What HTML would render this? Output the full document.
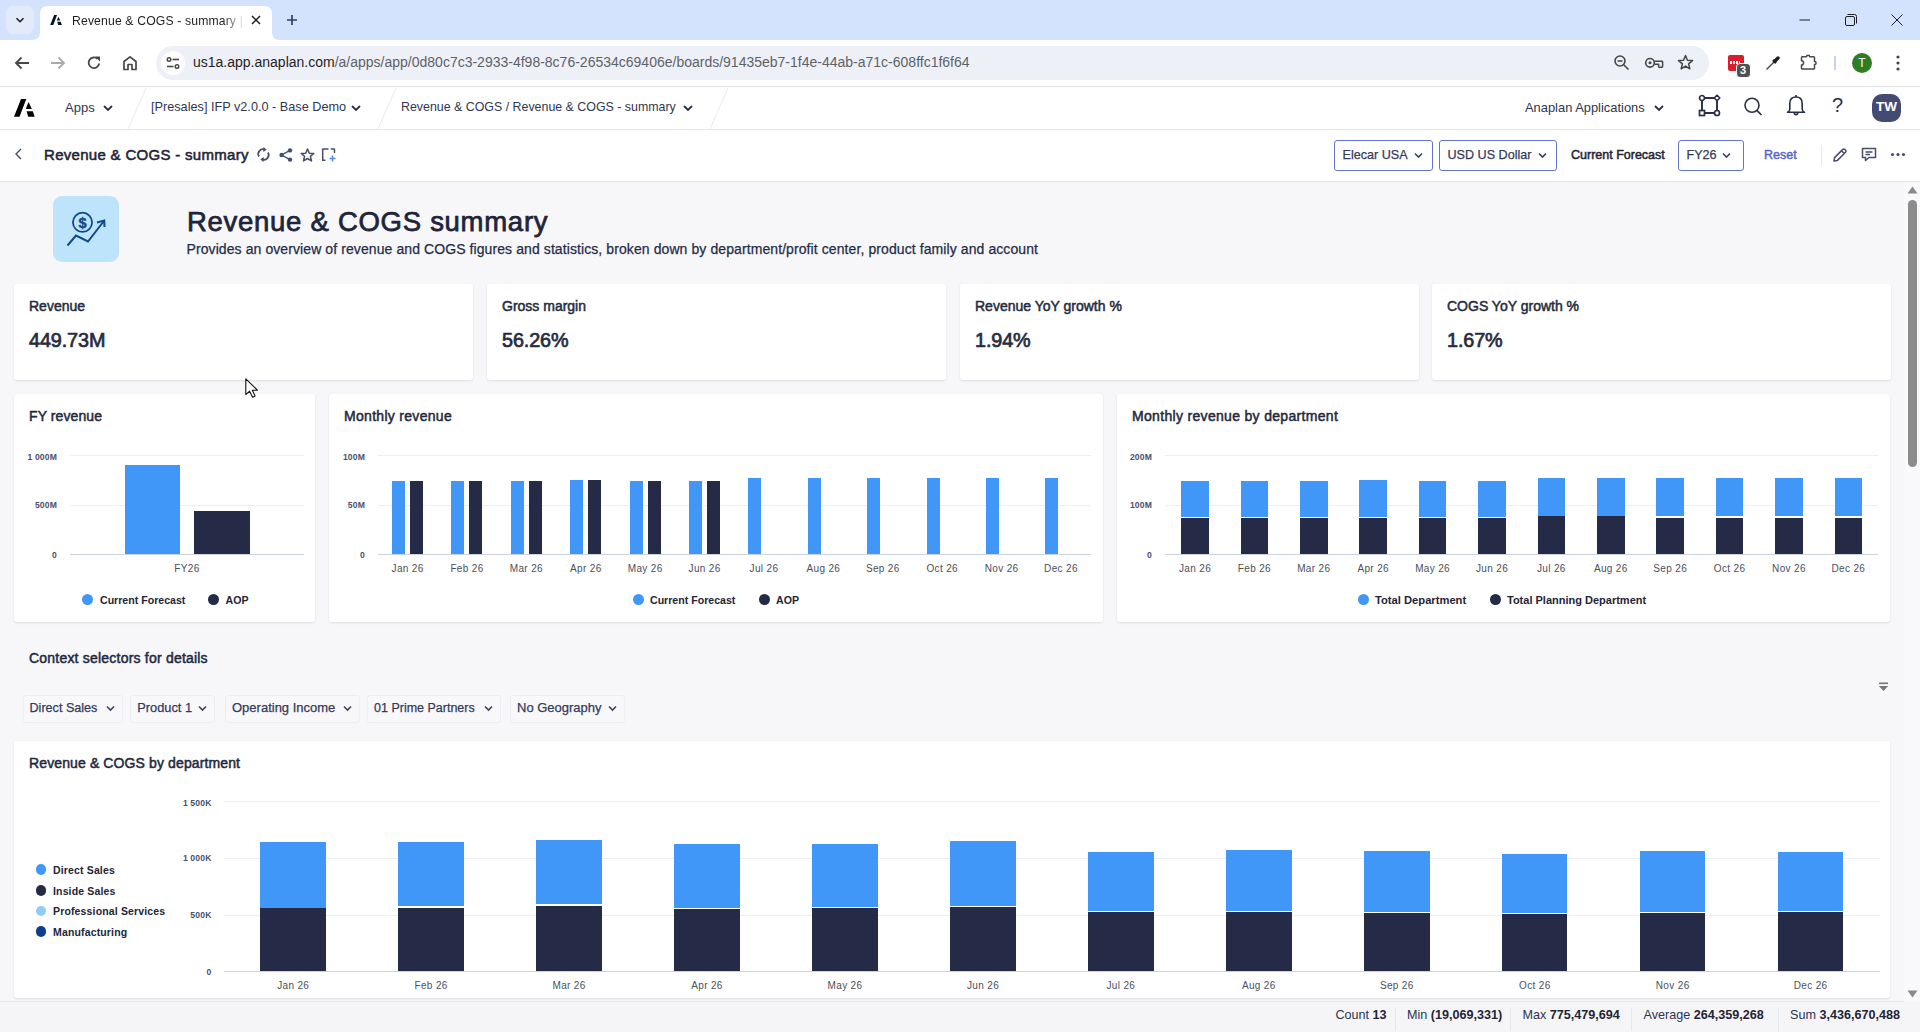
<!DOCTYPE html>
<html><head><meta charset="utf-8">
<style>
*{box-sizing:border-box;margin:0;padding:0}
html,body{width:1920px;height:1032px;overflow:hidden;background:#f7f7f9;font-family:"Liberation Sans",sans-serif;color:#1f2537}
.abs{position:absolute}
#tabs{position:absolute;left:0;top:0;width:1920px;height:40px;background:#d3e3fd}
#toolbar{position:absolute;left:0;top:40px;width:1920px;height:47px;background:#fff;border-bottom:1px solid #e3e3e3}
#apphdr{position:absolute;left:0;top:87px;width:1920px;height:43px;background:#fff;border-bottom:1px solid #e6e7ea}
#pagehdr{position:absolute;left:0;top:130px;width:1920px;height:52px;background:#fff;border-bottom:1px solid #e3e4e8}
#content{position:absolute;left:0;top:182px;width:1920px;height:818px;background:#f7f7f9;overflow:hidden}
#status{position:absolute;left:0;top:1001px;width:1920px;height:31px;background:#f5f5f8;border-top:1px solid #e6e7eb}
.card{position:absolute;background:#fff;border-radius:3px;box-shadow:0 1px 2.5px rgba(20,30,60,.11)}
.t{position:absolute;white-space:nowrap}
svg{position:absolute;overflow:visible}
</style></head><body>
<div id="tabs">
  <div class="abs" style="left:6px;top:6px;width:28px;height:28px;border-radius:8px;background:#e3ebfb"></div>
  <svg style="left:14px;top:14px" width="12" height="12" viewBox="0 0 12 12"><path d="M2.5 4.2 L6 7.7 L9.5 4.2" fill="none" stroke="#1f1f1f" stroke-width="1.6"/></svg>
  <svg style="left:32px;top:6px" width="250" height="34" viewBox="0 0 250 34"><path d="M0 34 Q8 34 8 26 L8 8 Q8 0 16 0 L232 0 Q240 0 240 8 L240 26 Q240 34 248 34 Z" fill="#fff"/></svg>
  <svg style="left:50.3px;top:15px" width="12" height="10" viewBox="0 0 20.7 17.8"><path d="M7 0 L12.3 0 L5.5 17.8 L0 17.8 Z" fill="#061520"/><path d="M14.5 2.9 L17.9 9.9 L11.8 9.9 Z" fill="#061520"/><path d="M12.6 12.2 L18.8 12.2 L20.7 17.8 L14.2 17.8 Z" fill="#061520"/></svg>
  <div class="t" style="left:72px;top:13.5px;font-size:12.2px;color:#1f1f1f;width:170px;overflow:hidden;letter-spacing:0.15px;-webkit-mask-image:linear-gradient(90deg,#000 89%,rgba(0,0,0,.15) 100%)">Revenue &amp; COGS - summary | Anaplan</div>
  <svg style="left:250px;top:14px" width="12" height="12" viewBox="0 0 12 12"><path d="M2 2 L10 10 M10 2 L2 10" stroke="#1f1f1f" stroke-width="1.5"/></svg>
  <svg style="left:287px;top:15px" width="10" height="10" viewBox="0 0 10 10"><path d="M5 0 V10 M0 5 H10" stroke="#34405a" stroke-width="1.7"/></svg>
  <svg style="left:1799px;top:14px" width="12" height="12" viewBox="0 0 12 12"><path d="M0.5 6 H11" stroke="#1f1f1f" stroke-width="1"/></svg>
  <svg style="left:1845px;top:14px" width="12" height="12" viewBox="0 0 12 12"><rect x="0.5" y="2.5" width="9" height="9" rx="1.5" fill="none" stroke="#1f1f1f" stroke-width="1"/><path d="M2.5 0.5 H9.5 Q11.5 0.5 11.5 2.5 V9.5" fill="none" stroke="#1f1f1f" stroke-width="1"/></svg>
  <svg style="left:1891px;top:14px" width="12" height="12" viewBox="0 0 12 12"><path d="M0.5 0.5 L11.5 11.5 M11.5 0.5 L0.5 11.5" stroke="#1f1f1f" stroke-width="1"/></svg>
</div>
<div id="toolbar">
  <svg style="left:14px;top:16px" width="16" height="14" viewBox="0 0 16 14"><path d="M15 7 H2 M7.5 1.5 L2 7 L7.5 12.5" fill="none" stroke="#474747" stroke-width="1.8"/></svg>
  <svg style="left:50px;top:16px" width="16" height="14" viewBox="0 0 16 14"><path d="M1 7 H14 M8.5 1.5 L14 7 L8.5 12.5" fill="none" stroke="#aaaaaa" stroke-width="1.8"/></svg>
  <svg style="left:86px;top:15px" width="16" height="16" viewBox="0 0 16 16"><path d="M13.2 8.5 A5.3 5.3 0 1 1 11.5 3.8" fill="none" stroke="#474747" stroke-width="1.8"/><path d="M9 1.5 H14 V6.5 Z" fill="#474747"/></svg>
  <svg style="left:122px;top:15px" width="16" height="16" viewBox="0 0 16 16"><path d="M2 14.5 V6.5 L8 1.8 L14 6.5 V14.5 H10 V9.5 H6 V14.5 Z" fill="none" stroke="#474747" stroke-width="1.7" stroke-linejoin="round"/></svg>
  <div class="abs" style="left:156px;top:6px;width:1553px;height:34px;border-radius:17px;background:#eef0f7"></div>
  <div class="abs" style="left:161px;top:11px;width:24px;height:24px;border-radius:12px;background:#fff"></div>
  <svg style="left:165px;top:15px" width="16" height="16" viewBox="0 0 16 16"><circle cx="4" cy="4.5" r="1.8" fill="none" stroke="#474747" stroke-width="1.4"/><path d="M7.5 4.5 H14" stroke="#474747" stroke-width="1.6"/><circle cx="12" cy="11.5" r="1.8" fill="none" stroke="#474747" stroke-width="1.4"/><path d="M2 11.5 H8.5" stroke="#474747" stroke-width="1.6"/></svg>
  <div class="t" style="left:193px;top:14px;font-size:14px;color:#5e6268"><span style="color:#1f1f1f">us1a.app.anaplan.com</span>/a/apps/app/0d80c7c3-2933-4f98-8c76-26534c69406e/boards/91435eb7-1f4e-44ab-a71c-608ffc1f6f64</div>
  <svg style="left:1613px;top:14px" width="18" height="18" viewBox="0 0 18 18"><circle cx="7" cy="7" r="5" fill="none" stroke="#474747" stroke-width="1.6"/><path d="M4.5 7 H9.5 M10.7 10.7 L15.5 15.5" stroke="#474747" stroke-width="1.6"/></svg>
  <svg style="left:1644px;top:15px" width="20" height="14" viewBox="0 0 20 14"><circle cx="6" cy="7.8" r="4.3" fill="none" stroke="#474747" stroke-width="1.6"/><circle cx="6" cy="7.8" r="1.5" fill="#474747"/><path d="M10.2 6.3 H18 Q18.6 6.3 18.6 6.9 V11.6 Q18.6 12.2 18 12.2 H15.2 Q14.6 12.2 14.6 11.6 V9.3 H10.2" fill="none" stroke="#474747" stroke-width="1.5" stroke-linejoin="round"/></svg>
  <svg style="left:1677px;top:14px" width="17" height="17" viewBox="0 0 17 17"><path d="M8.5 1.5 L10.4 6.2 L15.5 6.6 L11.6 9.8 L12.8 14.8 L8.5 12.1 L4.2 14.8 L5.4 9.8 L1.5 6.6 L6.6 6.2 Z" fill="none" stroke="#474747" stroke-width="1.5" stroke-linejoin="round"/></svg>
  <div class="abs" style="left:1728px;top:15px;width:16px;height:16px;border-radius:2px;background:#d81f2b"></div>
  <div class="abs" style="left:1730px;top:21px;width:10px;height:3px;background:repeating-linear-gradient(90deg,#fff 0 2px,transparent 2px 3px)"></div>
  <div class="abs" style="left:1735.5px;top:22.5px;width:15px;height:15px;border-radius:4px;background:#505050;border:1px solid #fff;color:#fff;font-size:11px;font-weight:700;text-align:center;line-height:13px">3</div>
  <svg style="left:1765px;top:15px" width="16" height="16" viewBox="0 0 16 16"><path d="M1.5 14.5 L9 7" stroke="#474747" stroke-width="1.5"/><path d="M8 5 L11 8" stroke="#1f1f1f" stroke-width="2.5"/><path d="M10 6 L13 3" stroke="#1f1f1f" stroke-width="3.5" stroke-linecap="round"/></svg>
  <svg style="left:1800px;top:14px" width="19" height="17" viewBox="0 0 19 17"><path d="M2.3 2.8 H6.5 A1.6 1.6 0 0 1 9.7 2.8 H13.7 Q14.5 2.8 14.5 3.6 V7.4 A1.6 1.6 0 0 1 14.5 10.6 V14.2 Q14.5 15 13.7 15 H2.3 Q1.5 15 1.5 14.2 V11 A2.1 2.1 0 0 0 1.5 6.8 V3.6 Q1.5 2.8 2.3 2.8 Z" fill="none" stroke="#474747" stroke-width="1.5" stroke-linejoin="round"/></svg>
  <div class="abs" style="left:1834px;top:16px;width:2px;height:14px;background:#c7d3ec"></div>
  <div class="abs" style="left:1852px;top:13px;width:20px;height:20px;border-radius:10px;background:#2e7d22;color:#fff;font-size:12px;text-align:center;line-height:20px">T</div>
  <svg style="left:1894px;top:15px" width="8" height="16" viewBox="0 0 8 16"><circle cx="4" cy="2" r="1.6" fill="#474747"/><circle cx="4" cy="8" r="1.6" fill="#474747"/><circle cx="4" cy="14" r="1.6" fill="#474747"/></svg>
</div>
<div id="apphdr">
  <svg style="left:14px;top:12px" width="22" height="19" viewBox="0 0 22 19"><path d="M7 0 L12.3 0 L5.5 17.8 L0 17.8 Z" fill="#000"/><path d="M14.5 2.9 L17.9 9.9 L11.8 9.9 Z" fill="#000"/><path d="M12.6 12.2 L18.8 12.2 L20.7 17.8 L14.2 17.8 Z" fill="#000"/></svg>
  <div class="t" style="left:65px;top:13px;font-size:13px;color:#30364f">Apps</div>
  <svg style="left:103px;top:17px" width="10" height="8" viewBox="0 0 10 8"><path d="M1 2 L5 6 L9 2" fill="none" stroke="#2a2f45" stroke-width="1.8"/></svg>
  <svg style="left:127px;top:0px" width="20" height="43" viewBox="0 0 20 43"><path d="M1 42 L19 1" stroke="#e9eaed" stroke-width="1"/></svg>
  <div class="t" style="left:151px;top:13px;font-size:12.7px;color:#30364f">[Presales] IFP v2.0.0 - Base Demo</div>
  <svg style="left:351px;top:17px" width="10" height="8" viewBox="0 0 10 8"><path d="M1 2 L5 6 L9 2" fill="none" stroke="#2a2f45" stroke-width="1.8"/></svg>
  <svg style="left:377px;top:0px" width="20" height="43" viewBox="0 0 20 43"><path d="M1 42 L19 1" stroke="#e9eaed" stroke-width="1"/></svg>
  <div class="t" style="left:401px;top:13px;font-size:12.4px;color:#30364f">Revenue &amp; COGS / Revenue &amp; COGS - summary</div>
  <svg style="left:683px;top:17px" width="10" height="8" viewBox="0 0 10 8"><path d="M1 2 L5 6 L9 2" fill="none" stroke="#2a2f45" stroke-width="1.8"/></svg>
  <svg style="left:709px;top:0px" width="20" height="43" viewBox="0 0 20 43"><path d="M1 42 L19 1" stroke="#e9eaed" stroke-width="1"/></svg>
  <div class="t" style="left:1525px;top:13px;font-size:12.9px;color:#30364f">Anaplan Applications</div>
  <svg style="left:1654px;top:17px" width="10" height="8" viewBox="0 0 10 8"><path d="M1 2 L5 6 L9 2" fill="none" stroke="#2a2f45" stroke-width="1.8"/></svg>
  <svg style="left:1698px;top:7px" width="23" height="23" viewBox="0 0 23 23"><path d="M4 4 H19 M4 19 H19 M4 4 V19 M19 4 V19" stroke="#2a2f45" stroke-width="1.9"/><circle cx="4" cy="4" r="2.5" fill="#fff" stroke="#2a2f45" stroke-width="1.7"/><path d="M19 1.2 L21.8 4 L19 6.8 L16.2 4 Z" fill="#fff" stroke="#2a2f45" stroke-width="1.6" stroke-linejoin="round"/><rect x="1.5" y="16.5" width="5" height="5" fill="#fff" stroke="#2a2f45" stroke-width="1.7"/><circle cx="19" cy="19" r="2.5" fill="#fff" stroke="#2a2f45" stroke-width="1.7"/></svg>
  <svg style="left:1743px;top:10px" width="21" height="21" viewBox="0 0 21 21"><circle cx="9" cy="8.3" r="7" fill="none" stroke="#2a2f45" stroke-width="1.6"/><path d="M13.8 13.3 L18.5 18" stroke="#2a2f45" stroke-width="1.7"/></svg>
  <svg style="left:1786px;top:7px" width="20" height="22" viewBox="0 0 20 22"><path d="M3.8 15.5 V9.5 Q3.8 3 10 3 Q16.2 3 16.2 9.5 V15.5 Q16.5 17.5 18.5 18.2 H1.5 Q3.5 17.5 3.8 15.5 Z" fill="none" stroke="#2a2f45" stroke-width="1.6" stroke-linejoin="round"/><path d="M10 1 V3 M8.2 18.5 Q8.2 20.6 10 20.6 Q11.8 20.6 11.8 18.5" fill="none" stroke="#2a2f45" stroke-width="1.6"/></svg>
  <div class="t" style="left:1832px;top:6.5px;font-size:20px;color:#2a2f45">?</div>
  <div class="abs" style="left:1872px;top:6.5px;width:29px;height:28.5px;border-radius:10px;background:#434b73;color:#fff;font-size:13.5px;font-weight:700;text-align:center;line-height:26.5px">TW</div>
</div>
<div id="pagehdr">
  <svg style="left:14px;top:17px" width="9" height="13" viewBox="0 0 9 13"><path d="M7 2 L2 7 L7 12" fill="none" stroke="#474d6b" stroke-width="1.4"/></svg>
  <div class="t" style="left:44px;top:15.5px;font-size:15px;font-weight:400;color:#1f2537;letter-spacing:0.3px;-webkit-text-stroke:0.55px #1f2537">Revenue &amp; COGS - summary</div>
  <svg style="left:257px;top:17px" width="13" height="15" viewBox="0 0 13 15"><path d="M2 9.5 A4.8 4.8 0 0 1 8 2.6" fill="none" stroke="#474d6b" stroke-width="1.7"/><path d="M6.5 0 L9.6 2.8 L6.3 5 Z" fill="#474d6b"/><path d="M11 5.5 A4.8 4.8 0 0 1 5 12.4" fill="none" stroke="#474d6b" stroke-width="1.7"/><path d="M6.5 15 L3.4 12.2 L6.7 10 Z" fill="#474d6b"/></svg>
  <svg style="left:279px;top:17.5px" width="14" height="14" viewBox="0 0 14 14"><circle cx="11" cy="2.4" r="2.2" fill="#474d6b"/><circle cx="2.6" cy="7" r="2.2" fill="#474d6b"/><circle cx="11" cy="11.6" r="2.2" fill="#474d6b"/><path d="M11 2.4 L2.6 7 L11 11.6" fill="none" stroke="#474d6b" stroke-width="1.4"/></svg>
  <svg style="left:300px;top:17.5px" width="15" height="14" viewBox="0 0 15 14"><path d="M7.5 1 L9.3 5.2 L13.8 5.5 L10.4 8.4 L11.5 12.9 L7.5 10.5 L3.5 12.9 L4.6 8.4 L1.2 5.5 L5.7 5.2 Z" fill="none" stroke="#474d6b" stroke-width="1.5" stroke-linejoin="round"/></svg>
  <svg style="left:322px;top:17.5px" width="14" height="14" viewBox="0 0 14 14"><path d="M4 1 L1 1 Q0.7 1 0.7 1.3 V12.3 H3.5 M6.5 1 L4 1 M8.8 1 H12 Q12.5 1 12.5 1.5 V5" fill="none" stroke="#474d6b" stroke-width="1.5"/><path d="M10.5 7.5 V13.5 M7.5 10.5 H13.5" stroke="#4a90e2" stroke-width="1.6"/></svg>
  <div class="abs" style="left:1334px;top:10px;width:99px;height:31px;border:1px solid #6474cc;border-radius:3px"></div>
  <div class="t" style="left:1342.5px;top:17.5px;font-size:12.6px;color:#353b58;-webkit-text-stroke:0.25px #353b58">Elecar USA</div>
  <svg style="left:1414px;top:22px" width="9" height="7" viewBox="0 0 9 7"><path d="M1 1.5 L4.5 5 L8 1.5" fill="none" stroke="#3b4160" stroke-width="1.6"/></svg>
  <div class="abs" style="left:1439px;top:10px;width:118px;height:31px;border:1px solid #6474cc;border-radius:3px"></div>
  <div class="t" style="left:1447.5px;top:17.5px;font-size:12.6px;color:#353b58;-webkit-text-stroke:0.25px #353b58">USD US Dollar</div>
  <svg style="left:1537.5px;top:22px" width="9" height="7" viewBox="0 0 9 7"><path d="M1 1.5 L4.5 5 L8 1.5" fill="none" stroke="#3b4160" stroke-width="1.7"/></svg>
  <div class="t" style="left:1571px;top:17.5px;font-size:12.5px;font-weight:400;color:#1f2537;-webkit-text-stroke:0.5px #1f2537">Current Forecast</div>
  <div class="abs" style="left:1678px;top:10px;width:66px;height:31px;border:1px solid #6474cc;border-radius:3px"></div>
  <div class="t" style="left:1686.5px;top:17.5px;font-size:12.6px;color:#353b58;-webkit-text-stroke:0.25px #353b58">FY26</div>
  <svg style="left:1722px;top:22px" width="9" height="7" viewBox="0 0 9 7"><path d="M1 1.5 L4.5 5 L8 1.5" fill="none" stroke="#3b4160" stroke-width="1.6"/></svg>
  <div class="t" style="left:1764px;top:17.5px;font-size:12.5px;font-weight:400;color:#5564d4;-webkit-text-stroke:0.45px #5564d4">Reset</div>
  <div class="abs" style="left:1821px;top:15px;width:1px;height:21px;background:#e6e8ee"></div>
  <svg style="left:1832px;top:17px" width="16" height="16" viewBox="0 0 16 16"><path d="M2 14 L2.6 10.6 L10.8 2.4 Q11.8 1.5 12.8 2.4 L13.6 3.2 Q14.5 4.2 13.6 5.2 L5.4 13.4 Z M9.5 3.8 L12.2 6.5" fill="none" stroke="#474d6b" stroke-width="1.5" stroke-linejoin="round"/></svg>
  <svg style="left:1861px;top:17px" width="16" height="15" viewBox="0 0 16 15"><path d="M1.5 1.5 H14.5 V10.5 H8 L4.5 13.5 V10.5 H1.5 Z" fill="none" stroke="#474d6b" stroke-width="1.5" stroke-linejoin="round"/><path d="M4.5 5 H11.5 M4.5 7.5 H9" stroke="#474d6b" stroke-width="1.4"/></svg>
  <svg style="left:1890px;top:22px" width="16" height="5" viewBox="0 0 16 5"><circle cx="2.5" cy="2.5" r="1.6" fill="#474d6b"/><circle cx="8" cy="2.5" r="1.6" fill="#474d6b"/><circle cx="13.5" cy="2.5" r="1.6" fill="#474d6b"/></svg>
</div>
<div id="content">
<div class="abs" style="left:53px;top:14px;width:66px;height:66px;border-radius:9px;background:#bde4fb"></div>
<svg style="left:53px;top:14px" width="66" height="66" viewBox="0 0 66 66">
<circle cx="29.5" cy="26.3" r="9.6" fill="none" stroke="#0f4a8a" stroke-width="1.8"/>
<text x="29.5" y="31.5" font-family="Liberation Sans" font-weight="700" font-size="14.5" fill="#0f4a8a" text-anchor="middle" stroke="#0f4a8a" stroke-width="0.4">$</text>
<path d="M14.5 49.5 L23 39.5 L35 45.5 L50.5 25.5" fill="none" stroke="#0f4a8a" stroke-width="2"/>
<path d="M44 26.5 L51.2 24.5 L51.5 31" fill="none" stroke="#0f4a8a" stroke-width="2.1"/>
</svg>
<div class="t" style="left:187px;top:24px;font-size:27.5px;font-weight:400;color:#1f2539;letter-spacing:0.72px;-webkit-text-stroke:0.75px #1f2539">Revenue &amp; COGS summary</div>
<div class="t" style="left:186.5px;top:59px;font-size:14px;font-weight:400;color:#262c48;letter-spacing:0.09px;-webkit-text-stroke:0.25px #262c48">Provides an overview of revenue and COGS figures and statistics, broken down by department/profit center, product family and account</div>
<div class="card" style="left:14px;top:102px;width:458.5px;height:96px"></div>
<div class="t" style="left:29px;top:116px;font-size:14px;font-weight:400;color:#262c40;letter-spacing:0px;-webkit-text-stroke:0.5px #262c40">Revenue</div>
<div class="t" style="left:29px;top:146.7px;font-size:19.8px;font-weight:400;color:#262c40;letter-spacing:-0.1px;-webkit-text-stroke:0.7px #262c40">449.73M</div>
<div class="card" style="left:487px;top:102px;width:458.5px;height:96px"></div>
<div class="t" style="left:502px;top:116px;font-size:14px;font-weight:400;color:#262c40;letter-spacing:0px;-webkit-text-stroke:0.5px #262c40">Gross margin</div>
<div class="t" style="left:502px;top:146.7px;font-size:19.8px;font-weight:400;color:#262c40;letter-spacing:-0.1px;-webkit-text-stroke:0.7px #262c40">56.26%</div>
<div class="card" style="left:960px;top:102px;width:458.5px;height:96px"></div>
<div class="t" style="left:975px;top:116px;font-size:14px;font-weight:400;color:#262c40;letter-spacing:0px;-webkit-text-stroke:0.5px #262c40">Revenue YoY growth %</div>
<div class="t" style="left:975px;top:146.7px;font-size:19.8px;font-weight:400;color:#262c40;letter-spacing:-0.1px;-webkit-text-stroke:0.7px #262c40">1.94%</div>
<div class="card" style="left:1432px;top:102px;width:458.5px;height:96px"></div>
<div class="t" style="left:1447px;top:116px;font-size:14px;font-weight:400;color:#262c40;letter-spacing:0px;-webkit-text-stroke:0.5px #262c40">COGS YoY growth %</div>
<div class="t" style="left:1447px;top:146.7px;font-size:19.8px;font-weight:400;color:#262c40;letter-spacing:-0.1px;-webkit-text-stroke:0.7px #262c40">1.67%</div>
<div class="card" style="left:14px;top:212px;width:301px;height:228px"></div>
<div class="card" style="left:329px;top:212px;width:774px;height:228px"></div>
<div class="card" style="left:1117px;top:212px;width:773px;height:228px"></div>
<div class="t" style="left:29px;top:225.8px;font-size:14px;font-weight:400;color:#232a3e;letter-spacing:0.1px;-webkit-text-stroke:0.5px #232a3e">FY revenue</div>
<div class="t" style="left:344px;top:225.8px;font-size:14px;font-weight:400;color:#232a3e;letter-spacing:0.3px;-webkit-text-stroke:0.5px #232a3e">Monthly revenue</div>
<div class="t" style="left:1132px;top:225.8px;font-size:14px;font-weight:400;color:#232a3e;letter-spacing:0.32px;-webkit-text-stroke:0.5px #232a3e">Monthly revenue by department</div>
<div class="abs" style="left:70px;top:273px;width:234px;height:1px;background:#eceef2"></div><div class="abs" style="left:70px;top:323px;width:234px;height:1px;background:#eceef2"></div><div class="abs" style="left:70px;top:372px;width:234px;height:1px;background:#ccd3e0"></div>
<div class="t" style="left:-3px;width:60px;text-align:right;top:269.85px;line-height:10px;font-size:8.6px;font-weight:700;color:#4a5070;letter-spacing:0.15px">1 000M</div>
<div class="t" style="left:-3px;width:60px;text-align:right;top:318.15px;line-height:10px;font-size:8.6px;font-weight:700;color:#4a5070;letter-spacing:0.15px">500M</div>
<div class="t" style="left:-3px;width:60px;text-align:right;top:368.15px;line-height:10px;font-size:8.6px;font-weight:700;color:#4a5070;letter-spacing:0.15px">0</div>
<div class="abs" style="left:125px;top:283px;width:55px;height:89px;background:#4197f7"></div>
<div class="abs" style="left:194px;top:329px;width:56px;height:43px;background:#252b47"></div>
<div class="t" style="left:147.0px;width:80px;text-align:center;top:380.5px;font-size:10px;color:#4b4f5c;letter-spacing:0.35px">FY26</div>
<div class="abs" style="left:82.0px;top:411.9px;width:11.0px;height:11.0px;border-radius:50%;background:#4197f7"></div>
<div class="t" style="left:100px;top:411.6px;font-size:10.6px;font-weight:700;color:#1f2537;">Current Forecast</div>
<div class="abs" style="left:208.0px;top:411.9px;width:11.0px;height:11.0px;border-radius:50%;background:#252b47"></div>
<div class="t" style="left:225.5px;top:411.6px;font-size:10.6px;font-weight:700;color:#1f2537;">AOP</div>
<div class="abs" style="left:378px;top:273px;width:713px;height:1px;background:#eceef2"></div><div class="abs" style="left:378px;top:323px;width:713px;height:1px;background:#eceef2"></div><div class="abs" style="left:378px;top:372px;width:713px;height:1px;background:#ccd3e0"></div>
<div class="t" style="left:305px;width:60px;text-align:right;top:269.85px;line-height:10px;font-size:8.6px;font-weight:700;color:#4a5070;letter-spacing:0.15px">100M</div>
<div class="t" style="left:305px;width:60px;text-align:right;top:318.15px;line-height:10px;font-size:8.6px;font-weight:700;color:#4a5070;letter-spacing:0.15px">50M</div>
<div class="t" style="left:305px;width:60px;text-align:right;top:368.15px;line-height:10px;font-size:8.6px;font-weight:700;color:#4a5070;letter-spacing:0.15px">0</div>
<div class="abs" style="left:392px;top:299px;width:13px;height:73px;background:#4197f7"></div>
<div class="abs" style="left:410px;top:299px;width:13px;height:73px;background:#252b47"></div>
<div class="t" style="left:367.6px;width:80px;text-align:center;top:380.5px;font-size:10px;color:#4b4f5c;letter-spacing:0.35px">Jan 26</div>
<div class="abs" style="left:451px;top:299px;width:13px;height:73px;background:#4197f7"></div>
<div class="abs" style="left:469px;top:299px;width:13px;height:73px;background:#252b47"></div>
<div class="t" style="left:427.0px;width:80px;text-align:center;top:380.5px;font-size:10px;color:#4b4f5c;letter-spacing:0.35px">Feb 26</div>
<div class="abs" style="left:511px;top:299px;width:13px;height:73px;background:#4197f7"></div>
<div class="abs" style="left:529px;top:299px;width:13px;height:73px;background:#252b47"></div>
<div class="t" style="left:486.4px;width:80px;text-align:center;top:380.5px;font-size:10px;color:#4b4f5c;letter-spacing:0.35px">Mar 26</div>
<div class="abs" style="left:570px;top:298px;width:13px;height:74px;background:#4197f7"></div>
<div class="abs" style="left:588px;top:298px;width:13px;height:74px;background:#252b47"></div>
<div class="t" style="left:545.8px;width:80px;text-align:center;top:380.5px;font-size:10px;color:#4b4f5c;letter-spacing:0.35px">Apr 26</div>
<div class="abs" style="left:630px;top:299px;width:13px;height:73px;background:#4197f7"></div>
<div class="abs" style="left:648px;top:299px;width:13px;height:73px;background:#252b47"></div>
<div class="t" style="left:605.2px;width:80px;text-align:center;top:380.5px;font-size:10px;color:#4b4f5c;letter-spacing:0.35px">May 26</div>
<div class="abs" style="left:689px;top:299px;width:13px;height:73px;background:#4197f7"></div>
<div class="abs" style="left:707px;top:299px;width:13px;height:73px;background:#252b47"></div>
<div class="t" style="left:664.6px;width:80px;text-align:center;top:380.5px;font-size:10px;color:#4b4f5c;letter-spacing:0.35px">Jun 26</div>
<div class="abs" style="left:748px;top:296px;width:13px;height:76px;background:#4197f7"></div>
<div class="t" style="left:724.0px;width:80px;text-align:center;top:380.5px;font-size:10px;color:#4b4f5c;letter-spacing:0.35px">Jul 26</div>
<div class="abs" style="left:808px;top:296px;width:13px;height:76px;background:#4197f7"></div>
<div class="t" style="left:783.4px;width:80px;text-align:center;top:380.5px;font-size:10px;color:#4b4f5c;letter-spacing:0.35px">Aug 26</div>
<div class="abs" style="left:867px;top:296px;width:13px;height:76px;background:#4197f7"></div>
<div class="t" style="left:842.8px;width:80px;text-align:center;top:380.5px;font-size:10px;color:#4b4f5c;letter-spacing:0.35px">Sep 26</div>
<div class="abs" style="left:927px;top:296px;width:13px;height:76px;background:#4197f7"></div>
<div class="t" style="left:902.2px;width:80px;text-align:center;top:380.5px;font-size:10px;color:#4b4f5c;letter-spacing:0.35px">Oct 26</div>
<div class="abs" style="left:986px;top:296px;width:13px;height:76px;background:#4197f7"></div>
<div class="t" style="left:961.6px;width:80px;text-align:center;top:380.5px;font-size:10px;color:#4b4f5c;letter-spacing:0.35px">Nov 26</div>
<div class="abs" style="left:1045px;top:296px;width:13px;height:76px;background:#4197f7"></div>
<div class="t" style="left:1021.0px;width:80px;text-align:center;top:380.5px;font-size:10px;color:#4b4f5c;letter-spacing:0.35px">Dec 26</div>
<div class="abs" style="left:633.0px;top:411.9px;width:11.0px;height:11.0px;border-radius:50%;background:#4197f7"></div>
<div class="t" style="left:650px;top:411.6px;font-size:10.6px;font-weight:700;color:#1f2537;">Current Forecast</div>
<div class="abs" style="left:758.5px;top:411.9px;width:11.0px;height:11.0px;border-radius:50%;background:#252b47"></div>
<div class="t" style="left:776px;top:411.6px;font-size:10.6px;font-weight:700;color:#1f2537;">AOP</div>
<div class="abs" style="left:1165px;top:273px;width:713px;height:1px;background:#eceef2"></div><div class="abs" style="left:1165px;top:323px;width:713px;height:1px;background:#eceef2"></div><div class="abs" style="left:1165px;top:372px;width:713px;height:1px;background:#ccd3e0"></div>
<div class="t" style="left:1092px;width:60px;text-align:right;top:269.85px;line-height:10px;font-size:8.6px;font-weight:700;color:#4a5070;letter-spacing:0.15px">200M</div>
<div class="t" style="left:1092px;width:60px;text-align:right;top:318.15px;line-height:10px;font-size:8.6px;font-weight:700;color:#4a5070;letter-spacing:0.15px">100M</div>
<div class="t" style="left:1092px;width:60px;text-align:right;top:368.15px;line-height:10px;font-size:8.6px;font-weight:700;color:#4a5070;letter-spacing:0.15px">0</div>
<div class="abs" style="left:1181px;top:299px;width:28px;height:36px;background:#4197f7"></div>
<div class="abs" style="left:1181px;top:336px;width:28px;height:36px;background:#252b47"></div>
<div class="t" style="left:1155.0px;width:80px;text-align:center;top:380.5px;font-size:10px;color:#4b4f5c;letter-spacing:0.35px">Jan 26</div>
<div class="abs" style="left:1241px;top:299px;width:27px;height:36px;background:#4197f7"></div>
<div class="abs" style="left:1241px;top:336px;width:27px;height:36px;background:#252b47"></div>
<div class="t" style="left:1214.4px;width:80px;text-align:center;top:380.5px;font-size:10px;color:#4b4f5c;letter-spacing:0.35px">Feb 26</div>
<div class="abs" style="left:1300px;top:299px;width:28px;height:36px;background:#4197f7"></div>
<div class="abs" style="left:1300px;top:336px;width:28px;height:36px;background:#252b47"></div>
<div class="t" style="left:1273.8px;width:80px;text-align:center;top:380.5px;font-size:10px;color:#4b4f5c;letter-spacing:0.35px">Mar 26</div>
<div class="abs" style="left:1359px;top:298px;width:28px;height:37px;background:#4197f7"></div>
<div class="abs" style="left:1359px;top:336px;width:28px;height:36px;background:#252b47"></div>
<div class="t" style="left:1333.2px;width:80px;text-align:center;top:380.5px;font-size:10px;color:#4b4f5c;letter-spacing:0.35px">Apr 26</div>
<div class="abs" style="left:1419px;top:299px;width:27px;height:36px;background:#4197f7"></div>
<div class="abs" style="left:1419px;top:336px;width:27px;height:36px;background:#252b47"></div>
<div class="t" style="left:1392.6px;width:80px;text-align:center;top:380.5px;font-size:10px;color:#4b4f5c;letter-spacing:0.35px">May 26</div>
<div class="abs" style="left:1478px;top:299px;width:28px;height:36px;background:#4197f7"></div>
<div class="abs" style="left:1478px;top:336px;width:28px;height:36px;background:#252b47"></div>
<div class="t" style="left:1452.0px;width:80px;text-align:center;top:380.5px;font-size:10px;color:#4b4f5c;letter-spacing:0.35px">Jun 26</div>
<div class="abs" style="left:1538px;top:296px;width:27px;height:38px;background:#4197f7"></div>
<div class="abs" style="left:1538px;top:334px;width:27px;height:38px;background:#252b47"></div>
<div class="t" style="left:1511.4px;width:80px;text-align:center;top:380.5px;font-size:10px;color:#4b4f5c;letter-spacing:0.35px">Jul 26</div>
<div class="abs" style="left:1597px;top:296px;width:28px;height:38px;background:#4197f7"></div>
<div class="abs" style="left:1597px;top:334px;width:28px;height:38px;background:#252b47"></div>
<div class="t" style="left:1570.8px;width:80px;text-align:center;top:380.5px;font-size:10px;color:#4b4f5c;letter-spacing:0.35px">Aug 26</div>
<div class="abs" style="left:1656px;top:296px;width:28px;height:38px;background:#4197f7"></div>
<div class="abs" style="left:1656px;top:336px;width:28px;height:36px;background:#252b47"></div>
<div class="t" style="left:1630.2px;width:80px;text-align:center;top:380.5px;font-size:10px;color:#4b4f5c;letter-spacing:0.35px">Sep 26</div>
<div class="abs" style="left:1716px;top:296px;width:27px;height:38px;background:#4197f7"></div>
<div class="abs" style="left:1716px;top:336px;width:27px;height:36px;background:#252b47"></div>
<div class="t" style="left:1689.6px;width:80px;text-align:center;top:380.5px;font-size:10px;color:#4b4f5c;letter-spacing:0.35px">Oct 26</div>
<div class="abs" style="left:1775px;top:296px;width:28px;height:38px;background:#4197f7"></div>
<div class="abs" style="left:1775px;top:336px;width:28px;height:36px;background:#252b47"></div>
<div class="t" style="left:1749.0px;width:80px;text-align:center;top:380.5px;font-size:10px;color:#4b4f5c;letter-spacing:0.35px">Nov 26</div>
<div class="abs" style="left:1835px;top:296px;width:27px;height:38px;background:#4197f7"></div>
<div class="abs" style="left:1835px;top:336px;width:27px;height:36px;background:#252b47"></div>
<div class="t" style="left:1808.4px;width:80px;text-align:center;top:380.5px;font-size:10px;color:#4b4f5c;letter-spacing:0.35px">Dec 26</div>
<div class="abs" style="left:1357.5px;top:411.9px;width:11.0px;height:11.0px;border-radius:50%;background:#4197f7"></div>
<div class="t" style="left:1375px;top:411.6px;font-size:11.2px;font-weight:700;color:#1f2537;">Total Department</div>
<div class="abs" style="left:1489.5px;top:411.9px;width:11.0px;height:11.0px;border-radius:50%;background:#252b47"></div>
<div class="t" style="left:1507px;top:411.6px;font-size:11px;font-weight:700;color:#1f2537;">Total Planning Department</div>
<div class="t" style="left:29px;top:468px;font-size:14px;font-weight:400;color:#232a3e;letter-spacing:0.21px;-webkit-text-stroke:0.5px #232a3e">Context selectors for details</div>
<div class="abs" style="left:22.5px;top:512.5px;width:100px;height:28px;border:1px solid #eceef4;border-radius:3px;background:#f8f8fb"></div>
<div class="t" style="left:29.5px;top:511.70000000000005px;height:28px;line-height:28px;font-size:12.6px;color:#353b58;-webkit-text-stroke:0.25px #353b58">Direct Sales</div>
<svg style="left:105.5px;top:523px" width="9" height="7" viewBox="0 0 9 7"><path d="M1 1.5 L4.5 5 L8 1.5" fill="none" stroke="#3b4160" stroke-width="1.6"/></svg>
<div class="abs" style="left:130.3px;top:512.5px;width:85px;height:28px;border:1px solid #eceef4;border-radius:3px;background:#f8f8fb"></div>
<div class="t" style="left:137.3px;top:511.70000000000005px;height:28px;line-height:28px;font-size:12.8px;color:#353b58;-webkit-text-stroke:0.25px #353b58">Product 1</div>
<svg style="left:198.3px;top:523px" width="9" height="7" viewBox="0 0 9 7"><path d="M1 1.5 L4.5 5 L8 1.5" fill="none" stroke="#3b4160" stroke-width="1.6"/></svg>
<div class="abs" style="left:225px;top:512.5px;width:135px;height:28px;border:1px solid #eceef4;border-radius:3px;background:#f8f8fb"></div>
<div class="t" style="left:232px;top:511.70000000000005px;height:28px;line-height:28px;font-size:13px;color:#353b58;-webkit-text-stroke:0.25px #353b58">Operating Income</div>
<svg style="left:343px;top:523px" width="9" height="7" viewBox="0 0 9 7"><path d="M1 1.5 L4.5 5 L8 1.5" fill="none" stroke="#3b4160" stroke-width="1.6"/></svg>
<div class="abs" style="left:367px;top:512.5px;width:134px;height:28px;border:1px solid #eceef4;border-radius:3px;background:#f8f8fb"></div>
<div class="t" style="left:374px;top:511.70000000000005px;height:28px;line-height:28px;font-size:12.5px;color:#353b58;-webkit-text-stroke:0.25px #353b58">01 Prime Partners</div>
<svg style="left:484px;top:523px" width="9" height="7" viewBox="0 0 9 7"><path d="M1 1.5 L4.5 5 L8 1.5" fill="none" stroke="#3b4160" stroke-width="1.6"/></svg>
<div class="abs" style="left:510px;top:512.5px;width:115px;height:28px;border:1px solid #eceef4;border-radius:3px;background:#f8f8fb"></div>
<div class="t" style="left:517px;top:511.70000000000005px;height:28px;line-height:28px;font-size:13px;color:#353b58;-webkit-text-stroke:0.25px #353b58">No Geography</div>
<svg style="left:608px;top:523px" width="9" height="7" viewBox="0 0 9 7"><path d="M1 1.5 L4.5 5 L8 1.5" fill="none" stroke="#3b4160" stroke-width="1.6"/></svg>
<svg style="left:1878px;top:499px" width="11" height="11" viewBox="0 0 11 11"><rect x="1" y="1.5" width="9" height="1.6" fill="#777"/><path d="M0.8 5 H10.2 L5.5 10 Z" fill="#777"/></svg>
<div class="card" style="left:14px;top:559px;width:1876px;height:257px"></div>
<div class="t" style="left:29px;top:573.3px;font-size:14px;font-weight:400;color:#232a3e;letter-spacing:0.12px;-webkit-text-stroke:0.5px #232a3e">Revenue &amp; COGS by department</div>
<div class="abs" style="left:224px;top:619px;width:1656px;height:1px;background:#eceef2"></div><div class="abs" style="left:224px;top:676px;width:1656px;height:1px;background:#eceef2"></div><div class="abs" style="left:224px;top:732.5px;width:1656px;height:1px;background:#eceef2"></div><div class="abs" style="left:224px;top:789px;width:1656px;height:1px;background:#ccd3e0"></div>
<div class="t" style="left:151.5px;width:60px;text-align:right;top:615.85px;line-height:10px;font-size:8.6px;font-weight:700;color:#4a5070;letter-spacing:0.15px">1 500K</div>
<div class="t" style="left:151.5px;width:60px;text-align:right;top:671.35px;line-height:10px;font-size:8.6px;font-weight:700;color:#4a5070;letter-spacing:0.15px">1 000K</div>
<div class="t" style="left:151.5px;width:60px;text-align:right;top:728.15px;line-height:10px;font-size:8.6px;font-weight:700;color:#4a5070;letter-spacing:0.15px">500K</div>
<div class="t" style="left:151.5px;width:60px;text-align:right;top:785.15px;line-height:10px;font-size:8.6px;font-weight:700;color:#4a5070;letter-spacing:0.15px">0</div>
<div class="abs" style="left:260px;top:660px;width:66px;height:66px;background:#4197f7"></div>
<div class="abs" style="left:260px;top:726px;width:66px;height:63px;background:#252b47"></div>
<div class="t" style="left:253.2px;width:80px;text-align:center;top:797.5px;font-size:10px;color:#4b4f5c;letter-spacing:0.35px">Jan 26</div>
<div class="abs" style="left:398px;top:660px;width:66px;height:64px;background:#4197f7"></div>
<div class="abs" style="left:398px;top:726px;width:66px;height:63px;background:#252b47"></div>
<div class="t" style="left:391.1px;width:80px;text-align:center;top:797.5px;font-size:10px;color:#4b4f5c;letter-spacing:0.35px">Feb 26</div>
<div class="abs" style="left:536px;top:658px;width:66px;height:64px;background:#4197f7"></div>
<div class="abs" style="left:536px;top:724px;width:66px;height:65px;background:#252b47"></div>
<div class="t" style="left:529.1px;width:80px;text-align:center;top:797.5px;font-size:10px;color:#4b4f5c;letter-spacing:0.35px">Mar 26</div>
<div class="abs" style="left:674px;top:662px;width:66px;height:64px;background:#4197f7"></div>
<div class="abs" style="left:674px;top:727px;width:66px;height:62px;background:#252b47"></div>
<div class="t" style="left:667.0px;width:80px;text-align:center;top:797.5px;font-size:10px;color:#4b4f5c;letter-spacing:0.35px">Apr 26</div>
<div class="abs" style="left:812px;top:662px;width:66px;height:63px;background:#4197f7"></div>
<div class="abs" style="left:812px;top:726px;width:66px;height:63px;background:#252b47"></div>
<div class="t" style="left:805.0px;width:80px;text-align:center;top:797.5px;font-size:10px;color:#4b4f5c;letter-spacing:0.35px">May 26</div>
<div class="abs" style="left:950px;top:659px;width:66px;height:65px;background:#4197f7"></div>
<div class="abs" style="left:950px;top:725px;width:66px;height:64px;background:#252b47"></div>
<div class="t" style="left:943.0px;width:80px;text-align:center;top:797.5px;font-size:10px;color:#4b4f5c;letter-spacing:0.35px">Jun 26</div>
<div class="abs" style="left:1088px;top:670px;width:66px;height:59px;background:#4197f7"></div>
<div class="abs" style="left:1088px;top:730px;width:66px;height:59px;background:#252b47"></div>
<div class="t" style="left:1080.9px;width:80px;text-align:center;top:797.5px;font-size:10px;color:#4b4f5c;letter-spacing:0.35px">Jul 26</div>
<div class="abs" style="left:1226px;top:668px;width:66px;height:61px;background:#4197f7"></div>
<div class="abs" style="left:1226px;top:730px;width:66px;height:59px;background:#252b47"></div>
<div class="t" style="left:1218.8px;width:80px;text-align:center;top:797.5px;font-size:10px;color:#4b4f5c;letter-spacing:0.35px">Aug 26</div>
<div class="abs" style="left:1364px;top:669px;width:66px;height:61px;background:#4197f7"></div>
<div class="abs" style="left:1364px;top:731px;width:66px;height:58px;background:#252b47"></div>
<div class="t" style="left:1356.8px;width:80px;text-align:center;top:797.5px;font-size:10px;color:#4b4f5c;letter-spacing:0.35px">Sep 26</div>
<div class="abs" style="left:1502px;top:672px;width:65px;height:59px;background:#4197f7"></div>
<div class="abs" style="left:1502px;top:732px;width:65px;height:57px;background:#252b47"></div>
<div class="t" style="left:1494.8px;width:80px;text-align:center;top:797.5px;font-size:10px;color:#4b4f5c;letter-spacing:0.35px">Oct 26</div>
<div class="abs" style="left:1640px;top:669px;width:65px;height:61px;background:#4197f7"></div>
<div class="abs" style="left:1640px;top:731px;width:65px;height:58px;background:#252b47"></div>
<div class="t" style="left:1632.7px;width:80px;text-align:center;top:797.5px;font-size:10px;color:#4b4f5c;letter-spacing:0.35px">Nov 26</div>
<div class="abs" style="left:1778px;top:670px;width:65px;height:59px;background:#4197f7"></div>
<div class="abs" style="left:1778px;top:730px;width:65px;height:59px;background:#252b47"></div>
<div class="t" style="left:1770.6px;width:80px;text-align:center;top:797.5px;font-size:10px;color:#4b4f5c;letter-spacing:0.35px">Dec 26</div>
<div class="abs" style="left:35.599999999999994px;top:682.3px;width:10.4px;height:10.4px;border-radius:50%;background:#4197f7"></div>
<div class="t" style="left:53px;top:681.5px;font-size:10.5px;font-weight:700;color:#1f2537;letter-spacing:0.15px">Direct Sales</div>
<div class="abs" style="left:35.599999999999994px;top:703.3px;width:10.4px;height:10.4px;border-radius:50%;background:#252b47"></div>
<div class="t" style="left:53px;top:702.5px;font-size:10.5px;font-weight:700;color:#1f2537;letter-spacing:0.15px">Inside Sales</div>
<div class="abs" style="left:35.599999999999994px;top:723.8px;width:10.4px;height:10.4px;border-radius:50%;background:#8dcdf7"></div>
<div class="t" style="left:53px;top:723px;font-size:10.5px;font-weight:700;color:#1f2537;letter-spacing:0.15px">Professional Services</div>
<div class="abs" style="left:35.599999999999994px;top:744.3px;width:10.4px;height:10.4px;border-radius:50%;background:#0e3f8f"></div>
<div class="t" style="left:53px;top:743.5px;font-size:10.5px;font-weight:700;color:#1f2537;letter-spacing:0.15px">Manufacturing</div>
</div>
<div id="status">
  <div class="t" style="left:1335.5px;top:5.5px;font-size:12.6px;color:#2c3350">Count <b style="color:#1f2537">13</b></div>
  <div class="abs" style="left:1395px;top:6px;width:1px;height:23px;background:#e6e7ec"></div>
  <div class="t" style="left:1407px;top:5.5px;font-size:12.6px;color:#2c3350">Min <b style="color:#1f2537">(19,069,331)</b></div>
  <div class="abs" style="left:1510px;top:6px;width:1px;height:23px;background:#e6e7ec"></div>
  <div class="t" style="left:1522.5px;top:5.5px;font-size:12.6px;color:#2c3350">Max <b style="color:#1f2537">775,479,694</b></div>
  <div class="abs" style="left:1631px;top:6px;width:1px;height:23px;background:#e6e7ec"></div>
  <div class="t" style="left:1643.5px;top:5.5px;font-size:12.6px;color:#2c3350">Average <b style="color:#1f2537">264,359,268</b></div>
  <div class="abs" style="left:1778px;top:6px;width:1px;height:23px;background:#e6e7ec"></div>
  <div class="t" style="left:1790px;top:5.5px;font-size:12.6px;color:#2c3350">Sum <b style="color:#1f2537">3,436,670,488</b></div>
</div>
<div class="abs" style="left:1904px;top:182px;width:16px;height:820px;background:#f9f9fb"></div>
<svg style="left:1907px;top:186px" width="11" height="8" viewBox="0 0 11 8"><path d="M5.5 0.5 L10.5 7.5 H0.5 Z" fill="#8a8a8a"/></svg>
<div class="abs" style="left:1908px;top:200px;width:9px;height:267px;border-radius:4.5px;background:#8c8c8c"></div>
<svg style="left:1907px;top:990px" width="11" height="8" viewBox="0 0 11 8"><path d="M0.5 0.5 H10.5 L5.5 7.5 Z" fill="#8a8a8a"/></svg>
<svg style="left:244.5px;top:377.5px" width="15" height="21" viewBox="0 0 15 21"><path d="M0.8 0.8 L0.8 16.6 L4.6 13.2 L7.6 19.2 L10.1 18 L7.3 12.2 L12.4 12.2 Z" fill="#fff" stroke="#111" stroke-width="1.1" stroke-linejoin="round"/></svg>
</body></html>
